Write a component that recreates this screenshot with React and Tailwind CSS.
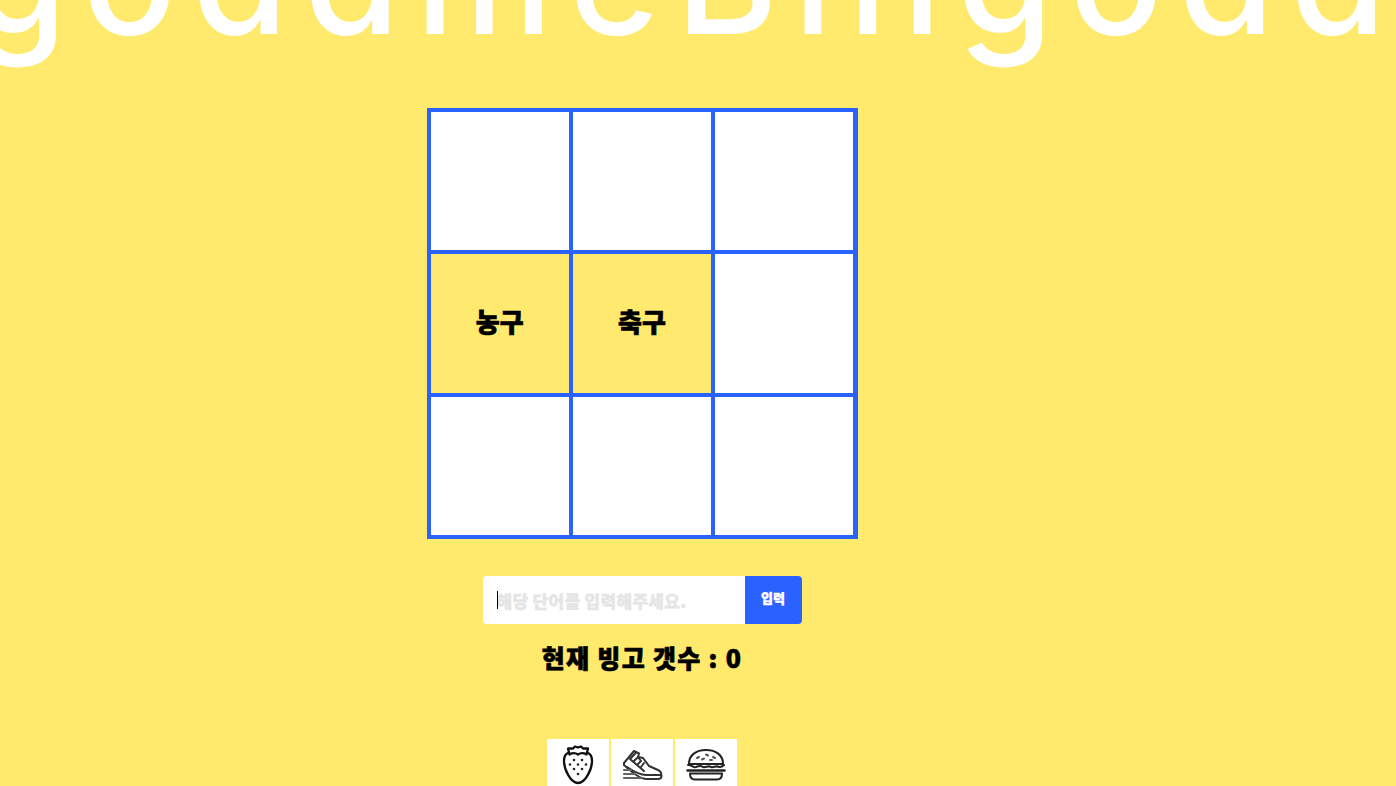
import React from "react";

const kr = { fontFamily: '"Noto Sans CJK KR", "Noto Sans", sans-serif' };

function Strawberry() {
  return (
    <svg width="46" height="46" viewBox="0 0 46 46" fill="none" stroke="#111" strokeWidth="2.3" strokeLinejoin="round" strokeLinecap="round">
      <path d="M14 12.5 C10.5 13.5 9 17 9 21 C9 30 16 43 23 43 C30 43 37 30 37 21 C37 17 35.5 13.5 32 12.5" />
      <path d="M14.5 14.5 L13 8.5 L18 8.5 L20 6.5 L23 7.5 L26 6.5 L28 8.5 L33 8.5 L31.5 14.5 C28 12.5 26 12.5 23 14.5 C20 12.5 18 12.5 14.5 14.5 Z" />
      <g fill="#222" stroke="none">
        <circle cx="19" cy="20" r="1.3" /><circle cx="27" cy="20" r="1.3" />
        <circle cx="15" cy="24.5" r="1.3" /><circle cx="23" cy="24.5" r="1.3" /><circle cx="31" cy="24.5" r="1.3" />
        <circle cx="19" cy="29" r="1.3" /><circle cx="27" cy="29" r="1.3" />
        <circle cx="23" cy="34" r="1.3" />
      </g>
    </svg>
  );
}

function Shoe() {
  return (
    <svg width="46" height="46" viewBox="0 0 46 46" fill="none" stroke="#333" strokeWidth="2" strokeLinejoin="round" strokeLinecap="round">
      <path d="M5 23 L15 11 L20 13.5 L19 17 L24 18 L30 26 L39 30 C41.5 31 42.5 33 42.5 36 C42.5 38 41 39 39 39 L28 39 C21 39 14 33 5 25 Z" />
      <path d="M8 27 C14 31 20 35 27 35 L42 35" />
      <path d="M17 12.5 L11 19 L25 31" />
      <path d="M19 17 L22 21 M15 21 L18 18 M19 24 L22 21 M22 27 L25 23" />
      <g stroke="#666" strokeWidth="2.2">
        <path d="M5 30 L12 30 M5 34 L16 34 M5 38 L22 38" />
      </g>
    </svg>
  );
}

function Burger() {
  return (
    <svg width="46" height="46" viewBox="0 0 46 46" fill="none" stroke="#222" strokeWidth="2" strokeLinejoin="round" strokeLinecap="round">
      <path d="M6 24 C6 15 13 10 23 10 C33 10 40 15 40 24 Z" />
      <path d="M14 18 L16 17 M23 14.5 L25 15.5 M30 17 L32 18 M19 19.5 L21 18.5 M27 20 L29 20" stroke="#555" />
      <path d="M5 25 C8 24 9 28 13 27 C16 26 17 25 20 27 C23 28 25 25 28 27 C31 28 33 25 36 27 C38 27.5 40 26 41 25" />
      <path d="M4.5 30.5 L41.5 30.5" strokeWidth="2.4" />
      <path d="M7 33.5 L39 33.5 C39 37.5 37 39.5 34 39.5 L12 39.5 C9 39.5 7 37.5 7 33.5 Z" />
    </svg>
  );
}

function Cell({ label }) {
  return (
    <div
      className={
        "flex items-center justify-center pb-1.5 text-[26px] font-black text-black [-webkit-text-stroke:0.7px_#000] " +
        (label ? "bg-[#ffe96e]" : "bg-white")
      }
      style={kr}
    >
      {label}
    </div>
  );
}

export default function App() {
  const cells = ["", "", "", "농구", "축구", "", "", "", ""];
  return (
    <div className="h-[786px] w-full overflow-hidden bg-[#ffea6e]">
      <header className="relative h-[108px] overflow-hidden">
        <div
          className="absolute left-[-29px] top-[-102px] whitespace-nowrap text-[155px] font-medium leading-[160px] tracking-[15.8px] text-white"
          style={{ fontFamily: 'Inter, sans-serif', fontFeatureSettings: '"cv11"' }}
        >
          godameBingodame
        </div>
      </header>
      <main className="flex flex-col items-center pr-[112px]">
        <div className="grid h-[431px] w-[431px] grid-cols-3 grid-rows-3 gap-1 border-4 border-[#2962ff] bg-[#2962ff]">
          {cells.map((c, i) => (
            <Cell key={i} label={c} />
          ))}
        </div>
        <div className="mt-[37px] flex h-12 w-[319px]">
          <div className="relative flex-1">
            <input
              placeholder="해당 단어를 입력해주세요."
              className="h-full w-full rounded-l bg-white pl-3.5 text-[17px] font-black tracking-[0.3px] text-black outline-none [-webkit-text-stroke:0.4px_#e5e5e5] placeholder:text-[#e5e5e5]"
              style={kr}
              readOnly
            />
            <span className="absolute left-[14px] top-[15px] h-[18px] w-px bg-black" />
          </div>
          <button className="w-[57px] rounded-r bg-[#2962ff] pb-1 text-[13px] font-black text-white [-webkit-text-stroke:0.4px_#fff]" style={kr}>
            입력
          </button>
        </div>
        <p className="mt-[16px] text-[25px] font-black leading-[34px] tracking-[1.3px] text-black [-webkit-text-stroke:0.7px_#000]" style={kr}>
          현재 빙고 갯수 : 0
        </p>
        <div className="mt-[65px] flex gap-0.5">
          <div className="flex h-[62px] w-[62px] justify-center bg-white pt-px"><Strawberry /></div>
          <div className="flex h-[62px] w-[62px] justify-center bg-white pt-px"><Shoe /></div>
          <div className="flex h-[62px] w-[62px] justify-center bg-white pt-px"><Burger /></div>
        </div>
      </main>
    </div>
  );
}
